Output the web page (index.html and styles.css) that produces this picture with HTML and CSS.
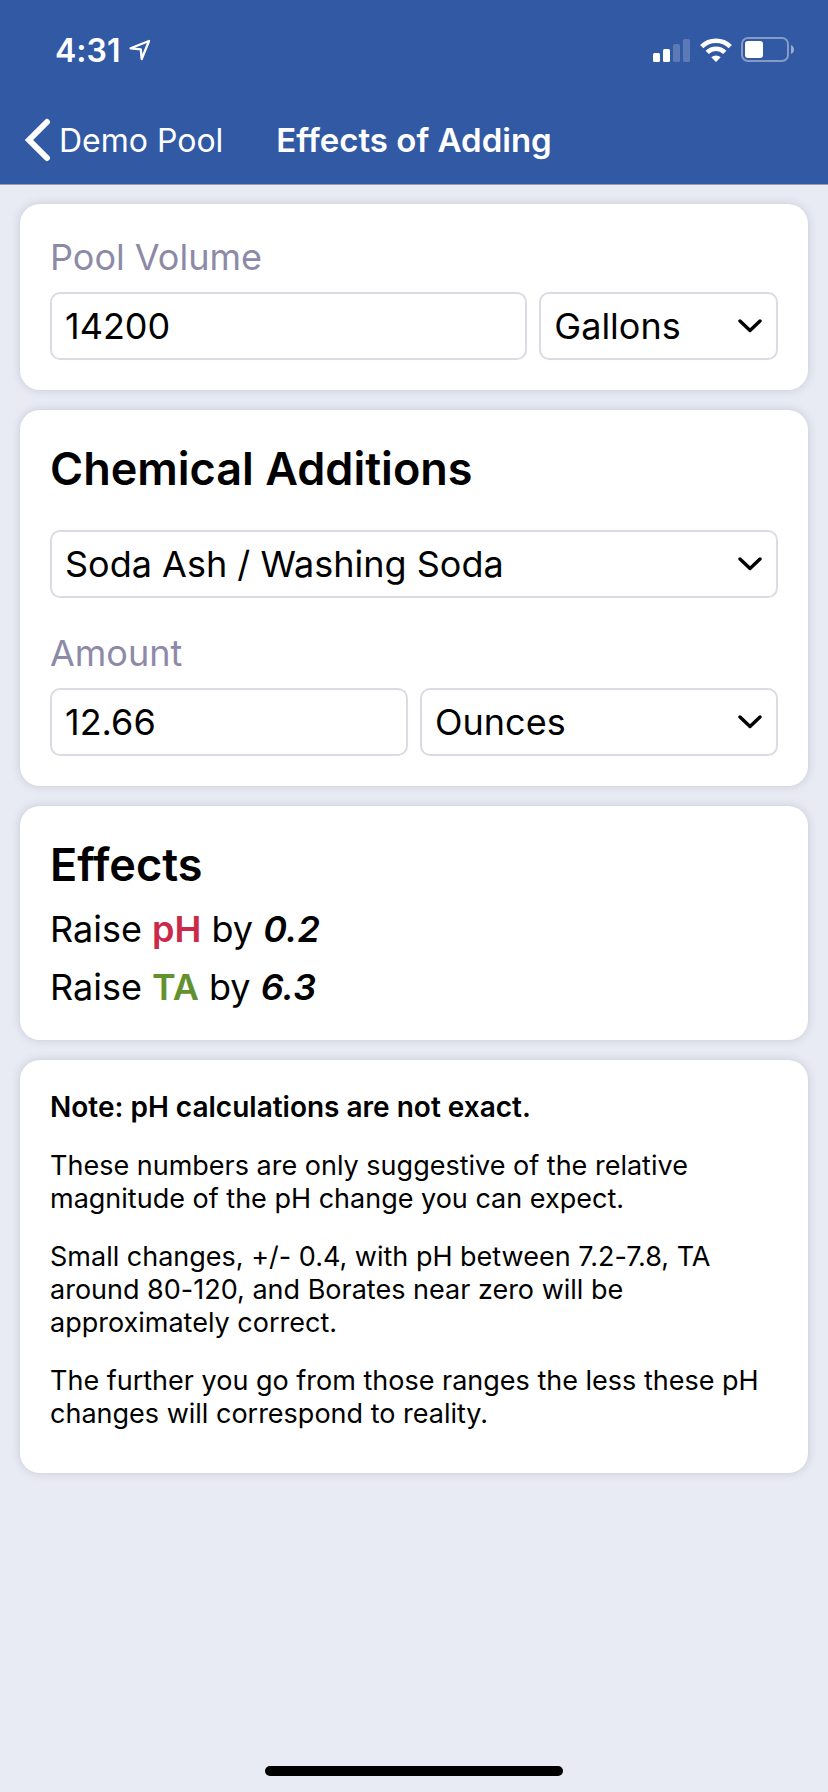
FILE: index.html
```html
<!DOCTYPE html>
<html lang="en">
<head>
<meta charset="utf-8">
<meta name="viewport" content="width=device-width, initial-scale=1">
<title>Effects of Adding</title>
<link rel="stylesheet" href="styles.css">
</head>
<body class="app">
<header class="header">
  <div class="status">
    <div class="status-group status-time">
      <span>4:31</span>
      <svg width="22" height="22" viewBox="0 0 22 22" aria-hidden="true"><path d="M20 2 L1.600 9.300 L11.800 10.400 L12.700 20 Z" fill="none" stroke="#fff" stroke-width="2.300" stroke-linejoin="round"/></svg>
    </div>
    <div class="status-group status-icons">
      <svg width="38" height="24" viewBox="0 0 38 24" aria-hidden="true">
        <rect x="0" y="15" width="7" height="9" rx="1.500" fill="#fff"/>
        <rect x="10" y="11" width="7" height="13" rx="1.500" fill="#fff"/>
        <rect x="20" y="6" width="7" height="18" rx="1.500" fill="#fff" opacity=".2"/>
        <rect x="30" y="1" width="7" height="23" rx="1.500" fill="#fff" opacity=".2"/>
      </svg>
      <svg width="32" height="24" viewBox="0 0 32 24" aria-hidden="true">
        <g fill="none" stroke="#fff" stroke-width="4.600">
          <path d="M1.700 8.600 A20.500 20.500 0 0 1 30.300 8.600"/>
          <path d="M7.200 14.400 A12.500 12.500 0 0 1 24.800 14.400"/>
        </g>
        <path d="M16 24 L11.300 19.300 A6.800 6.800 0 0 1 20.700 19.300 Z" fill="#fff"/>
      </svg>
      <svg width="54" height="26" viewBox="0 0 54 26" aria-hidden="true">
        <rect x="1" y="1" width="46" height="23" rx="6" fill="none" stroke="#fff" stroke-width="2" opacity=".4"/>
        <rect x="4" y="4" width="18" height="17" rx="3" fill="#fff"/>
        <path d="M50 8 Q53 9.500 53 12.500 Q53 15.500 50 17 Z" fill="#fff" opacity=".5"/>
      </svg>
    </div>
  </div>
  <nav class="nav">
    <a class="back" href="#">
      <svg width="26" height="44" viewBox="0 0 26 44" aria-hidden="true"><path d="M22 4 L4 22 L22 40" fill="none" stroke="#fff" stroke-width="6" stroke-linecap="round" stroke-linejoin="miter"/></svg>
      <span>Demo Pool</span>
    </a>
    <h1 class="title">Effects of Adding</h1>
  </nav>
</header>

<main class="content">
  <section class="card">
    <label class="label" for="volume">Pool Volume</label>
    <div class="fields fields-wide">
      <input class="field" id="volume" type="text" inputmode="decimal" value="14200">
      <div class="picker">
        <select class="field" aria-label="Volume unit"><option>Gallons</option><option>Liters</option></select>
        <svg class="chevron" width="24" height="14" viewBox="0 0 24 14" aria-hidden="true"><path d="M2 2 L12 11.500 L22 2"/></svg>
      </div>
    </div>
  </section>

  <section class="card">
    <h2 class="heading heading-spaced">Chemical Additions</h2>
    <div class="picker">
      <select class="field" aria-label="Chemical"><option>Soda Ash / Washing Soda</option><option>Baking Soda</option></select>
      <svg class="chevron" width="24" height="14" viewBox="0 0 24 14" aria-hidden="true"><path d="M2 2 L12 11.500 L22 2"/></svg>
    </div>
    <label class="label label-next" for="amount">Amount</label>
    <div class="fields">
      <input class="field" id="amount" type="text" inputmode="decimal" value="12.66">
      <div class="picker">
        <select class="field" aria-label="Amount unit"><option>Ounces</option><option>Pounds</option></select>
        <svg class="chevron" width="24" height="14" viewBox="0 0 24 14" aria-hidden="true"><path d="M2 2 L12 11.500 L22 2"/></svg>
      </div>
    </div>
  </section>

  <section class="card card-effects">
    <h2 class="heading">Effects</h2>
    <p class="effect">Raise <b class="ph">pH</b> by <b class="amount">0.2</b></p>
    <p class="effect">Raise <b class="ta">TA</b> by <b class="amount">6.3</b></p>
  </section>

  <section class="card card-note">
    <p class="note note-strong">Note: pH calculations are not exact.</p>
    <p class="note">These numbers are only suggestive of the relative magnitude of the pH change you can expect.</p>
    <p class="note">Small changes, +/- 0.4, with pH between 7.2-7.8, TA around 80-120, and Borates near zero will be approximately correct.</p>
    <p class="note">The further you go from those ranges the less these pH changes will correspond to reality.</p>
  </section>
</main>
<div class="home"></div>
</body>
</html>
```
FILE: styles.css
```css
* { box-sizing: border-box; }

.app {
  margin: 0;
  min-height: 100vh;
  display: flex;
  flex-direction: column;
  background: #e8ebf4;
  color: #000;
  font-family: Inter, "Liberation Sans", sans-serif;
  font-size: 36px;
  font-variant-ligatures: no-common-ligatures no-contextual;
}

.header {
  background: #3259a4;
  color: #fff;
  border-bottom: 1px solid #9b9ca6;
}

.status {
  height: 96px;
  padding: 4px 33px 0 55px;
  display: flex;
  align-items: center;
  justify-content: space-between;
}
.status-group { display: flex; align-items: center; }
.status-time { gap: 9px; font-size: 32px; font-weight: 600; }
.status-icons { gap: 9px; }

.nav {
  height: 88px;
  padding: 0 25px;
  display: grid;
  grid-template-columns: 1fr auto 1fr;
  align-items: center;
}
.back {
  display: flex;
  align-items: center;
  gap: 8px;
  color: #fff;
  font-size: 32px;
  text-decoration: none;
}
.title { margin: 0; font-size: 33px; font-weight: 600; }

.content {
  padding: 19px 20px;
  display: flex;
  flex-direction: column;
  gap: 20px;
}
.card {
  padding: 30px;
  border-radius: 20px;
  background: #fff;
  box-shadow: 0 0 10px rgba(70, 60, 90, .2);
}
.card-effects { padding-bottom: 24px; }
.card-note { padding-bottom: 43px; }

.label {
  display: block;
  margin-bottom: 12px;
  color: #8c8aa7;
  line-height: 46px;
}
.label-next { margin-top: 32px; }

.fields { display: grid; grid-template-columns: 1fr 1fr; gap: 12px; }
.fields-wide { grid-template-columns: 2fr 1fr; }
.field {
  display: block;
  width: 100%;
  min-width: 0;
  height: 68px;
  margin: 0;
  padding: 0 13px;
  border: 2px solid #dcdbe4;
  border-radius: 10px;
  background: #fff;
  color: #000;
  font: inherit;
  appearance: none;
}
.picker { position: relative; }
.chevron {
  position: absolute;
  right: 16px;
  top: 27px;
  fill: none;
  stroke: #000;
  stroke-width: 3.4;
  stroke-linecap: round;
  stroke-linejoin: round;
  pointer-events: none;
}

.heading { margin: 0 0 6px; font-size: 45px; font-weight: 600; line-height: 58px; }
.heading-spaced { margin-bottom: 32px; }

.effect { margin: 0; line-height: 58px; }
.effect b { font-weight: 600; }
.ph { color: #c92a49; }
.ta { color: #649130; }
.amount { font-style: italic; }

.card-note { padding-top: 31px; }
.note { margin: 0 0 25px; font-size: 27px; line-height: 33px; }
.note:last-child { margin-bottom: 0; }
.note-strong { font-size: 28px; font-weight: 600; }

.home {
  width: 36%;
  height: 10px;
  margin: auto auto 16px;
  border-radius: 5px;
  background: #000;
}
```
